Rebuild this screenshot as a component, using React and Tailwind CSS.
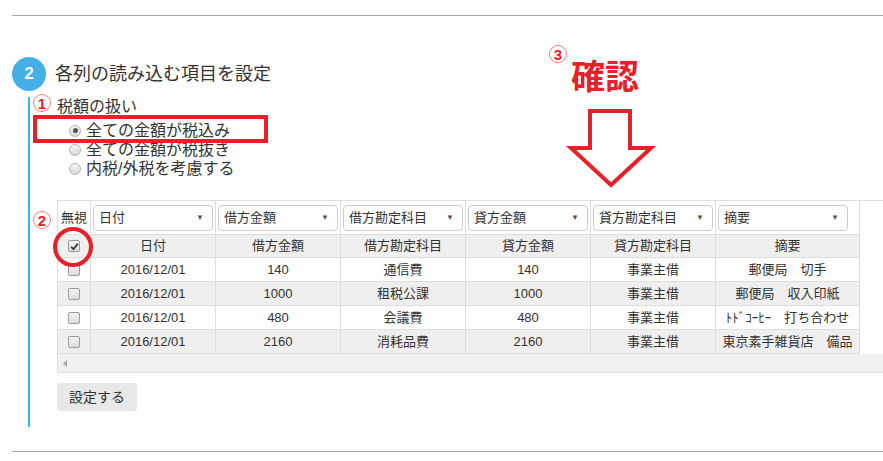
import React from 'react';

const FONT = { fontFamily: '"Liberation Sans", "Noto Sans CJK JP", sans-serif' };

const columns = ['日付', '借方金額', '借方勘定科目', '貸方金額', '貸方勘定科目', '摘要'];

const rows = [
  ['2016/12/01', '140', '通信費', '140', '事業主借', '郵便局　切手'],
  ['2016/12/01', '1000', '租税公課', '1000', '事業主借', '郵便局　収入印紙'],
  ['2016/12/01', '480', '会議費', '480', '事業主借', 'ﾄﾄﾞｺｰﾋｰ　打ち合わせ'],
  ['2016/12/01', '2160', '消耗品費', '2160', '事業主借', '東京素手雑貨店　備品'],
];

// widths of the data columns (border included)
const colW = ['w-[125px]', 'w-[125px]', 'w-[125px]', 'w-[125px]', 'w-[125px]', 'w-[144px]'];
const selW = ['w-[120px]', 'w-[120px]', 'w-[120px]', 'w-[120px]', 'w-[120px]', 'w-[130px]'];

const Checkbox = ({ checked }) => (
  <span className="w-[12px] h-[12px] rounded-[2px] border border-[#9a9a9a] bg-gradient-to-b from-[#f4f4f4] to-[#dcdcdc] flex items-center justify-center">
    {checked && (
      <svg width="9" height="9" viewBox="0 0 9 9">
        <path d="M1.2 4.8 L3.5 7.2 L7.8 1.6" fill="none" stroke="#333" strokeWidth="1.8" />
      </svg>
    )}
  </span>
);

const Radio = ({ checked }) => (
  <span className="w-[12px] h-[12px] rounded-full border border-[#b5b5b5] bg-gradient-to-b from-[#f6f6f6] to-[#d8d8d8] flex items-center justify-center shrink-0">
    {checked && <span className="w-[5px] h-[5px] rounded-full bg-[#555]" />}
  </span>
);

const Circled = ({ n, className }) => (
  <span className={`absolute w-[18px] h-[18px] rounded-full border border-[#f08080] text-[#e8202a] font-bold text-[15px] leading-none flex items-center justify-center ${className}`}>
    {n}
  </span>
);

export default function App() {
  return (
    <div className="relative w-[883px] h-[461px] bg-white overflow-hidden text-[#333]" style={FONT}>
      <div className="pl-[12px] pt-[15px]">
        <div className="h-px bg-[#aaaaaa]" />
      </div>

      {/* step heading */}
      <div className="flex items-center pl-[12px] mt-[41px]">
        <span className="w-[34px] h-[34px] rounded-full bg-[#45b0e6] text-white font-bold text-[17px] flex items-center justify-center">2</span>
        <span className="ml-[9px] text-[18px] leading-[24px]">各列の読み込む項目を設定</span>
      </div>

      {/* step body */}
      <div className="ml-[28px] mt-[6px] border-l-2 border-[#3fb4ec] pl-[27px] pb-[16px]">
        <div className="text-[16px] leading-[20px]">税額の扱い</div>
        <div className="mt-[4px] pl-[12px] text-[16px] leading-[19px]">
          <label className="flex items-center gap-[5px]"><Radio checked />全ての金額が税込み</label>
          <label className="flex items-center gap-[5px]"><Radio />全ての金額が税抜き</label>
          <label className="flex items-center gap-[5px]"><Radio />内税/外税を考慮する</label>
        </div>

        {/* preview table */}
        <div className="mt-[22px] border-t border-l border-b border-[#dddddd] text-[13px]">
          <div className="flex w-[802px] h-[34px] border-b border-[#dddddd] bg-white">
            <div className="w-[33px] border-r border-[#dddddd] flex items-center justify-center">無視</div>
            {columns.map((c, i) => (
              <div key={c} className={`${colW[i]} border-r border-[#dddddd] flex items-center pl-[2px]`}>
                <div className={`${selW[i]} h-[26px] rounded-[4px] border border-[#cccccc] bg-white flex items-center justify-between pl-[5px] pr-[8px]`}>
                  <span>{c}</span>
                  <span className="text-[8px] text-[#555]">▼</span>
                </div>
              </div>
            ))}
          </div>

          <div className="flex w-[802px] h-[23px] border-b border-[#dddddd] bg-[#efefef]">
            <div className="w-[33px] border-r border-[#dddddd] flex items-center justify-center">
              <Checkbox checked />
            </div>
            {columns.map((c, i) => (
              <div key={c} className={`${colW[i]} border-r border-[#dddddd] flex items-center justify-center`}>{c}</div>
            ))}
          </div>

          {rows.map((r, ri) => (
            <div key={ri} className={`flex w-[802px] h-[24px] border-b border-[#dddddd] ${ri % 2 ? 'bg-[#efefef]' : 'bg-white'}`}>
              <div className="w-[33px] border-r border-[#dddddd] flex items-center justify-center">
                <Checkbox />
              </div>
              {r.map((v, i) => (
                <div key={i} className={`${colW[i]} border-r border-[#dddddd] flex items-center justify-center whitespace-nowrap overflow-hidden`}>{v}</div>
              ))}
            </div>
          ))}

          {/* horizontal scrollbar */}
          <div className="h-[18px] bg-[#f1f1f1] flex items-center pl-[5px]">
            <svg width="4" height="7" viewBox="0 0 4 7"><path d="M4 0 L0 3.5 L4 7 Z" fill="#a3a3a3" /></svg>
          </div>
        </div>

        <button className="mt-[10px] h-[28px] px-[12px] rounded-[3px] bg-[#e8e8e8] text-[14px] text-[#333]">設定する</button>
      </div>

      <div className="pl-[12px] mt-[24px]">
        <div className="h-px bg-[#aaaaaa]" />
      </div>

      {/* annotations laid over the screenshot */}
      <Circled n="1" className="left-[33px] top-[94px]" />
      <Circled n="2" className="left-[33px] top-[211px]" />
      <Circled n="3" className="left-[549px] top-[45px]" />
      <div className="absolute left-[33px] top-[115px] w-[235px] h-[28px] border-4 border-[#e8202a]" />
      <div className="absolute left-[53px] top-[227px] w-[40px] h-[40px] rounded-full border-4 border-[#e8202a]" />
      <div className="absolute left-[571px] top-[60px] text-[34px] font-bold leading-none text-[#e8202a]">確認</div>
      <svg className="absolute left-0 top-0" width="883" height="461" style={{ pointerEvents: 'none' }}>
        <path d="M590 111 L630 111 L630 148 L651 148 L611 185 L571 148 L590 148 Z" fill="none" stroke="#e8202a" strokeWidth="4" strokeLinejoin="miter" />
      </svg>
    </div>
  );
}
